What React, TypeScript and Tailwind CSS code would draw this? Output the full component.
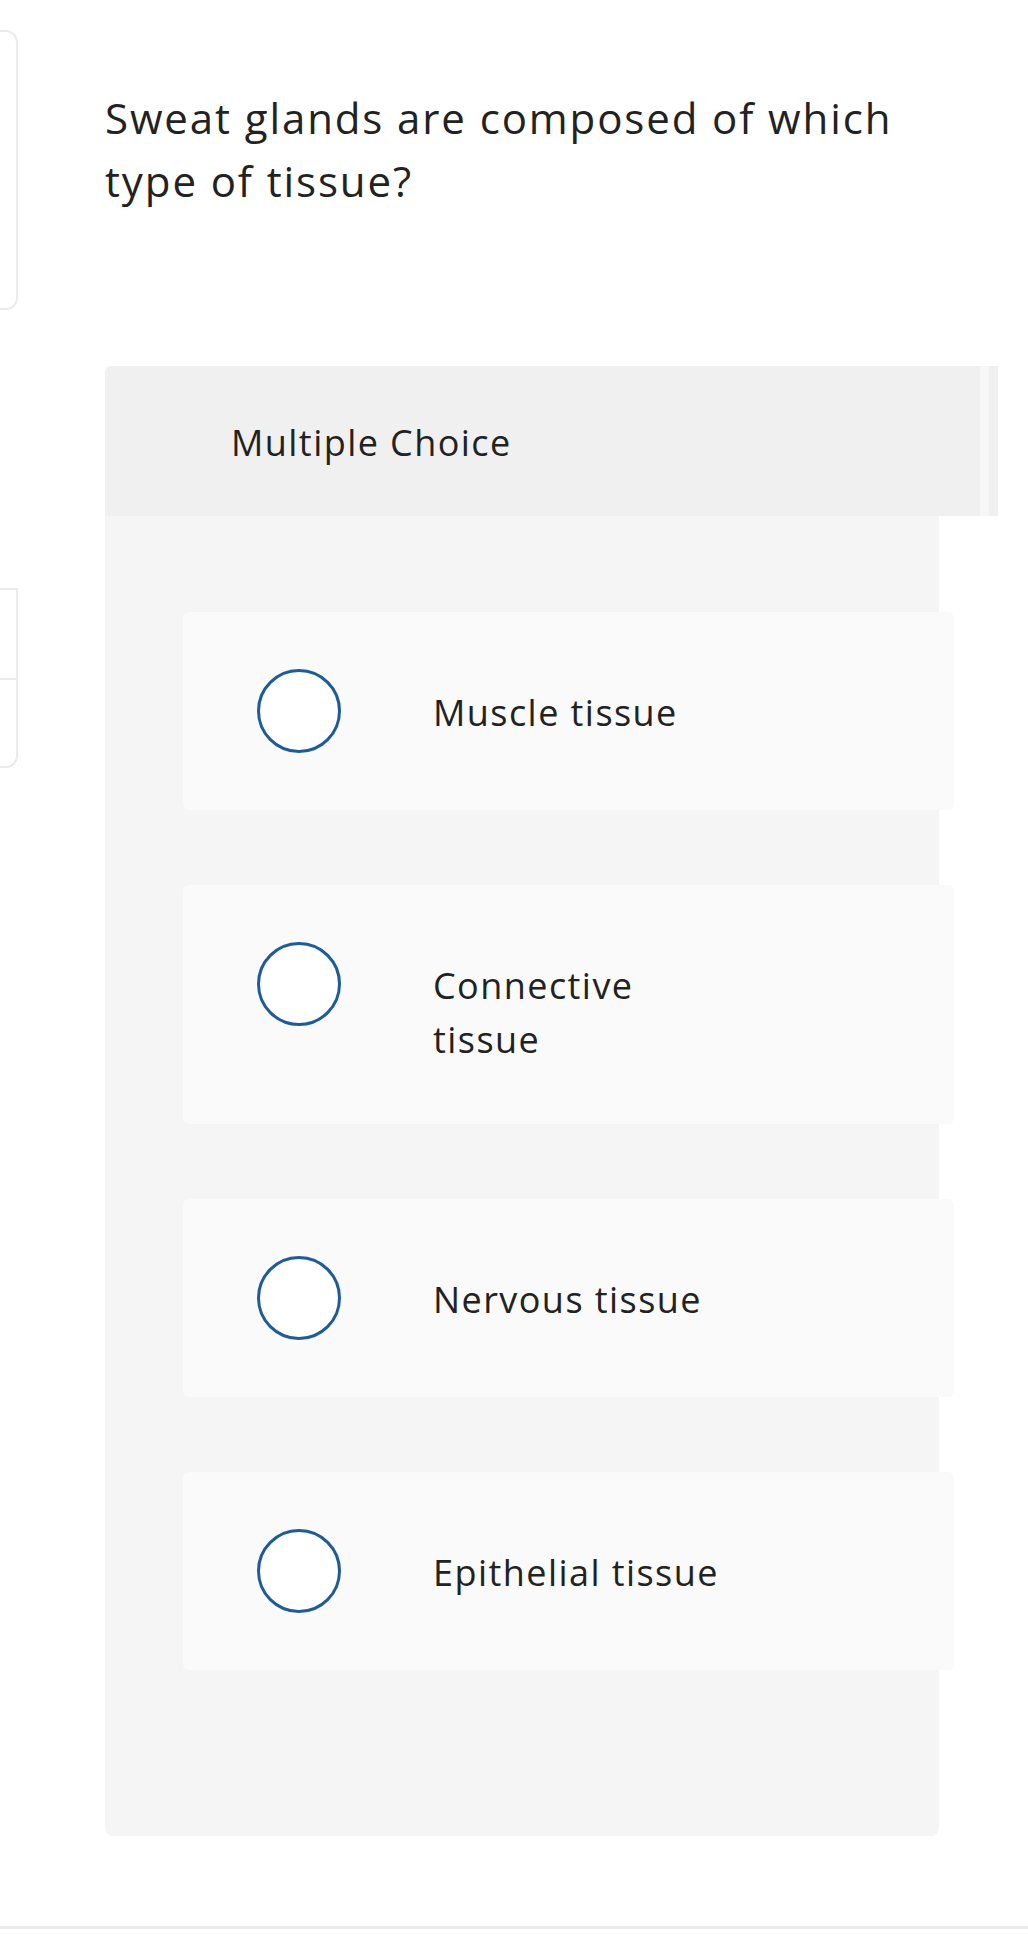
import React from 'react';

const options = ['Muscle tissue', 'Connective tissue', 'Nervous tissue', 'Epithelial tissue'];

// Single answer row: empty radio ring + label
const OptionCard: React.FC<{ label: string }> = ({ label }) => (
  <div className="w-[771px] flex items-start bg-[#fafafa] rounded-md pl-[74px] py-[57px]">
    <span className="w-[84px] h-[84px] shrink-0 rounded-full border-[3px] border-[#1f5b96] bg-white" />
    <span className="ml-[92px] mt-[17px] max-w-[300px] text-[36px] leading-[54px] tracking-[0.04em] text-[#222]">
      {label}
    </span>
  </div>
);

const App: React.FC = () => {
  return (
    <div
      className="relative w-[1028px] h-[1936px] bg-white overflow-hidden"
      style={{ fontFamily: '"Open Sans", "Noto Sans", sans-serif' }}
    >
      <div className="flex">
        {/* Side column, mostly scrolled out of view */}
        <aside className="w-[18px] shrink-0">
          <div className="mt-[30px] h-[280px] border-y-2 border-r-2 border-[#ebebeb] rounded-r-[12px]" />
          <div className="mt-[278px] h-[180px] border-y-2 border-r-2 border-[#ebebeb] rounded-br-[12px] flex flex-col">
            <div className="h-[90px] border-b-2 border-[#ebebeb]" />
          </div>
        </aside>

        <main className="ml-[87px] pt-[86px]">
          <h1 className="w-[820px] text-[42px] leading-[63px] tracking-[0.045em] text-[#222] font-normal">
            Sweat glands are composed of which type of tissue?
          </h1>

          <section className="mt-[154px]">
            <div className="flex h-[150px]">
              <div className="w-[875px] bg-[#f0f0f0] rounded-tl-md pl-[126px] pt-[50px]">
                <span className="text-[36px] leading-[53px] tracking-[0.04em] text-[#222]">Multiple Choice</span>
              </div>
              <div className="w-[9px] bg-[#f7f7f7]" />
              <div className="w-[9px] bg-[#f0f0f0]" />
            </div>
            <div className="w-[834px] bg-[#f5f5f5] rounded-b-lg pl-[78px] pt-[96px] pb-[166px] flex flex-col gap-[75px]">
              {options.map((o) => (
                <OptionCard key={o} label={o} />
              ))}
            </div>
          </section>
        </main>
      </div>

      <div className="absolute left-0 right-0 top-[1926px] h-[3px] bg-[#ebebeb]" />
    </div>
  );
};

export default App;
